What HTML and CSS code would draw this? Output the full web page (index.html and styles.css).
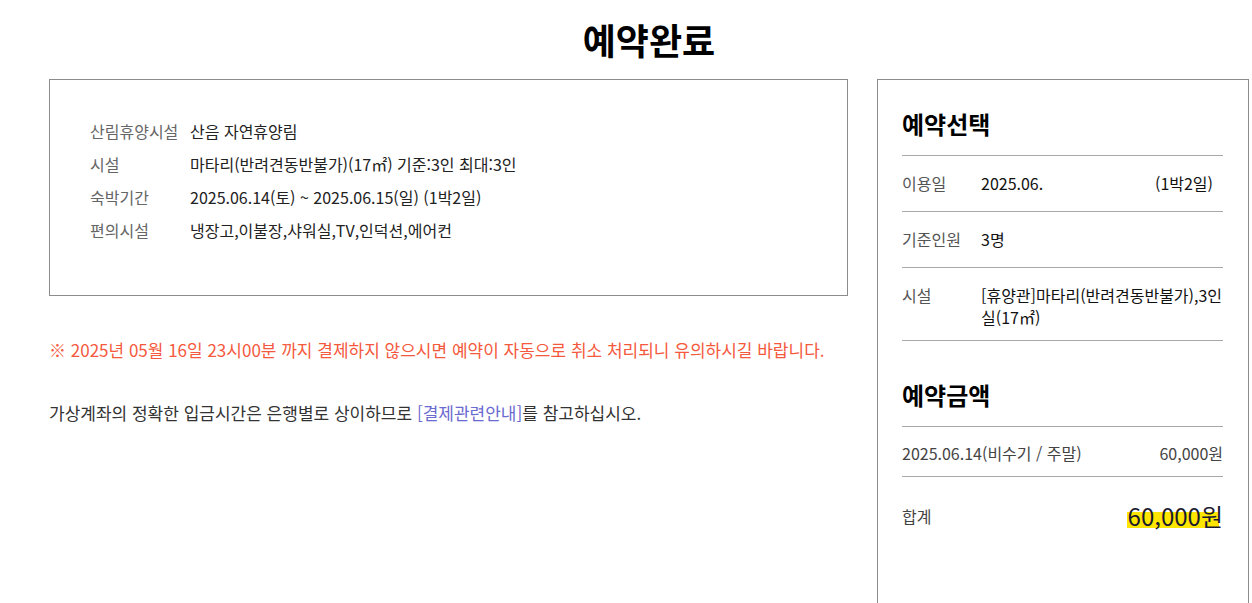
FILE: index.html
```html
<!DOCTYPE html>
<html lang="ko">
<head>
<meta charset="utf-8">
<title>예약완료</title>
<link rel="stylesheet" href="styles.css">
</head>
<body>
<div class="page">
  <h1 class="title">예약완료</h1>
  <div class="layout">
    <div class="main">
      <div class="info-box">
        <div class="info-row"><span class="info-label">산림휴양시설</span><span class="info-value">산음 자연휴양림</span></div>
        <div class="info-row"><span class="info-label">시설</span><span class="info-value">마타리(반려견동반불가)(17㎡) 기준:3인 최대:3인</span></div>
        <div class="info-row"><span class="info-label">숙박기간</span><span class="info-value">2025.06.14(토) ~ 2025.06.15(일) (1박2일)</span></div>
        <div class="info-row"><span class="info-label">편의시설</span><span class="info-value">냉장고,이불장,샤워실,TV,인덕션,에어컨</span></div>
      </div>
      <p class="notice">※ 2025년 05월 16일 23시00분 까지 결제하지 않으시면 예약이 자동으로 취소 처리되니 유의하시길 바랍니다.</p>
      <p class="guide">가상계좌의 정확한 입금시간은 은행별로 상이하므로 <span class="link">[결제관련안내]</span>를 참고하십시오.</p>
    </div>
    <aside class="side">
      <h2 class="side-title">예약선택</h2>
      <div class="side-row"><span class="side-label">이용일</span><span class="side-value date-value"><span>2025.06.</span><span>(1박2일)</span></span></div>
      <div class="side-row"><span class="side-label">기준인원</span><span class="side-value">3명</span></div>
      <div class="side-row"><span class="side-label">시설</span><span class="side-value">[휴양관]마타리(반려견동반불가),3인실(17㎡)</span></div>
      <h2 class="side-title second">예약금액</h2>
      <div class="price-row"><span>2025.06.14(비수기 / 주말)</span><span>60,000원</span></div>
      <div class="total-row"><span class="total-label">합계</span><span class="total-value">60,000원</span></div>
    </aside>
  </div>
</div>
</body>
</html>
```

FILE: styles.css
```css
* { box-sizing: border-box; }
html, body { margin: 0; padding: 0; background: #fff; }
body {
  font-family: "Noto Sans CJK KR", "Noto Sans", sans-serif;
  color: #222;
  font-size: 16px;
}
.page {
  width: 1200px;
  margin-left: 49px;
}
.title {
  margin: 0;
  height: 79px;
  padding-top: 14px;
  text-align: center;
  font-size: 36px;
  line-height: 50px;
  font-weight: 700;
  color: #000;
}
.layout {
  display: flex;
  gap: 29px;
  align-items: flex-start;
}
.main {
  width: 799px;
}
.info-box {
  border: 1px solid #8c8c8c;
  padding: 35px 40px 46px;
  height: 217px;
}
.info-row {
  display: flex;
  line-height: 33px;
}
.info-label {
  width: 100px;
  color: #666;
}
.info-value {
  color: #222;
}
.notice {
  margin: 42px 0 0;
  font-size: 17px;
  line-height: 24px;
  color: #f5593d;
}
.guide {
  margin: 39px 0 0;
  font-size: 17px;
  line-height: 24px;
  color: #333;
}
.link {
  color: #6a6ad0;
}
.side {
  width: 372px;
  min-height: 540px;
  border: 1px solid #8c8c8c;
  border-bottom: 0;
  padding: 28px 25px 0 24px;
}
.side-title {
  margin: 0;
  font-size: 24px;
  line-height: 32px;
  font-weight: 700;
  color: #000;
  padding-bottom: 15px;
  border-bottom: 1px solid #a8a8a8;
}
.side-title.second {
  margin-top: 38px;
}
.side-row {
  display: flex;
  align-items: flex-start;
  min-height: 56px;
  padding: 16px 0 12px;
  line-height: 22px;
  border-bottom: 1px solid #a8a8a8;
}
.side-label {
  width: 79px;
  flex: none;
  color: #555;
}
.side-value {
  flex: 1;
  color: #111;
}
.date-value {
  display: flex;
  justify-content: space-between;
  padding-right: 10px;
}
.price-row {
  display: flex;
  justify-content: space-between;
  padding: 15px 0 12px;
  line-height: 22px;
  color: #444;
  border-bottom: 1px solid #a8a8a8;
}
.total-row {
  display: flex;
  justify-content: space-between;
  align-items: center;
  padding-top: 24px;
  line-height: 30px;
}
.total-label {
  color: #444;
}
.total-value {
  font-size: 24px;
  color: #1a1a2e;
  padding-left: 1px;
  background: linear-gradient(to bottom, transparent 38%, #ffe600 38%, #ffe600 90%, transparent 90%) no-repeat left top;
  background-size: calc(100% - 4px) 100%;
}
```
